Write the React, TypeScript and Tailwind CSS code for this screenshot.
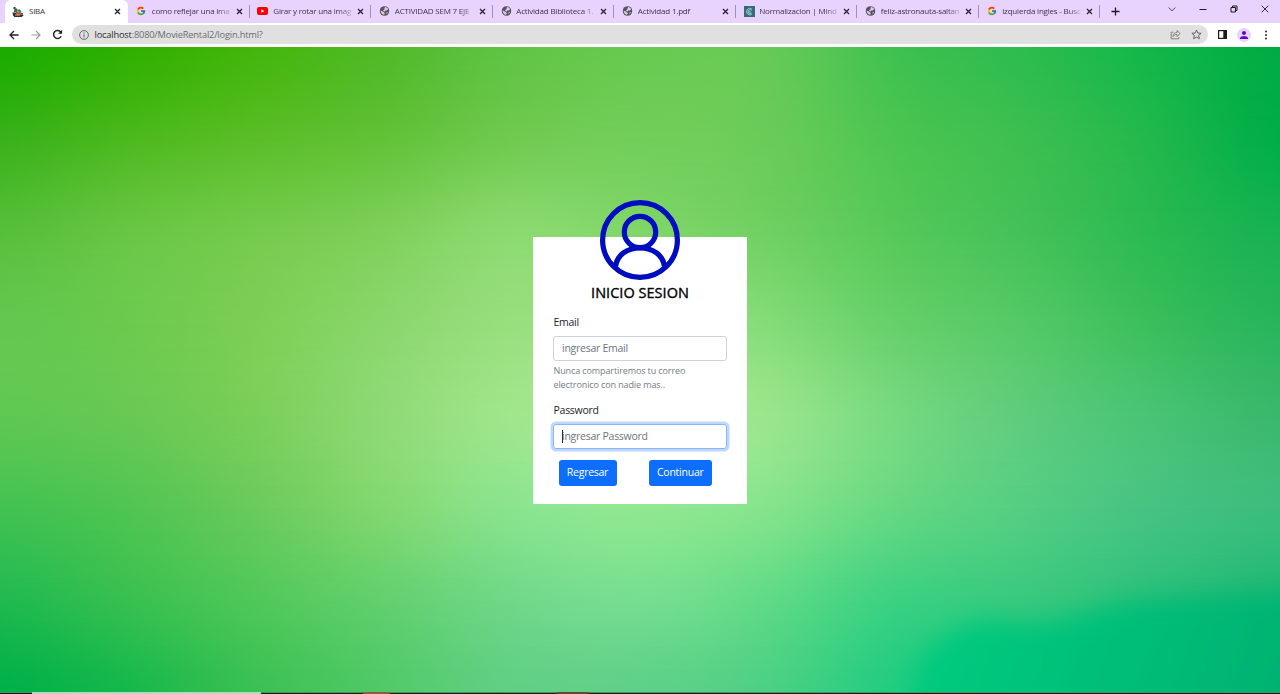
import type { ReactNode } from "react";
import { FcGoogle } from "react-icons/fc";
import { MdPerson } from "react-icons/md";

/* ---------- page background: a smooth colour mesh ---------- */

const MESH = [
  "1aac00 2fb000 43b60c 50ba28 60c444 68ca50 66ca56 3fc150 2dbc4e 12b74a 00ab43",
  "38b21a 4cb91e 5abe28 62c238 70ca50 72ce5a 6acc58 4cc552 3cbf50 22b84c 00ae48",
  "56bf3a 68c644 74cb4c 7ed05a 8bda70 80d669 70d062 56c95a 44c158 2aba52 18b252",
  "62c850 6cca4e 7ccf56 8ad76c 98df7e 98e080 84dc78 66d06a 54c966 3abe5c 28b55c",
  "5ec852 68c954 7acf5a 8eda76 a0e68c a6ea94 9ae58c 76d980 5ecc7c 48c474 3ab86c",
  "42c252 50c552 6acb5c 82d870 8ae48e 90e890 84e48c 66d882 54ce82 46c382 3cbd7c",
  "20ba50 38c050 50c85a 62d06e 70d888 76de90 60da86 3cd182 38c97e 2ac07a 1cb874",
  "00b049 16b84c 3ac052 50c968 60cf84 5ed088 4cd084 20cc80 0cc67c 04b975 00af6f",
].map((row) =>
  row.split(" ").map((h) => [0, 2, 4].map((i) => parseInt(h.slice(i, i + 2), 16)))
);

const STEP = 4;

function spline(a: number, b: number, c: number, d: number, t: number) {
  return (
    0.5 *
    (2 * b + (c - a) * t + (2 * a - 5 * b + 4 * c - d) * t * t + (3 * b - a - 3 * c + d) * t * t * t)
  );
}

function refine(points: number[][]): number[][] {
  const out: number[][] = [];
  const at = (i: number) => points[Math.max(0, Math.min(points.length - 1, i))];
  for (let i = 0; i < points.length - 1; i++) {
    for (let s = 0; s < STEP; s++) {
      out.push(
        at(i).map((_, k) => spline(at(i - 1)[k], at(i)[k], at(i + 1)[k], at(i + 2)[k], s / STEP))
      );
    }
  }
  out.push(points[points.length - 1]);
  return out;
}

function buildMesh() {
  const wide = MESH.map(refine);
  const columns = wide[0].map((_, c) => refine(wide.map((row) => row[c])));
  return columns[0].map((_, r) => columns.map((col) => col[r]));
}

const ROWS = buildMesh();
const BAND = 645 / (ROWS.length - 1);

const css = (c: number[]) =>
  `rgb(${c.map((v) => Math.round(Math.max(0, Math.min(255, v)))).join(",")})`;

function Backdrop() {
  return (
    <svg className="absolute inset-0 h-full w-full" viewBox="0 0 1280 645" preserveAspectRatio="none">
      <defs>
        {ROWS.map((row, r) => (
          <linearGradient key={r} id={`row${r}`} gradientUnits="userSpaceOnUse" x1="0" x2="1280" y1="0" y2="0">
            {row.map((c, i) => (
              <stop key={i} offset={i / (row.length - 1)} stopColor={css(c)} />
            ))}
          </linearGradient>
        ))}
        <linearGradient id="fade" x1="0" x2="0" y1="0" y2="1">
          <stop offset="0" stopColor="#000" />
          <stop offset="1" stopColor="#fff" />
        </linearGradient>
        <mask id="down" maskContentUnits="objectBoundingBox" style={{ maskType: "luminance" }}>
          <rect width="1" height="1" fill="url(#fade)" />
        </mask>
        <linearGradient id="sea" x1="0" x2="1" y1="0" y2="0.15">
          <stop offset="0" stopColor="#00cd80" />
          <stop offset="0.4" stopColor="#00c27a" />
          <stop offset="1" stopColor="#00b070" />
        </linearGradient>
        <filter id="soft" x="-20%" y="-60%" width="140%" height="220%">
          <feGaussianBlur stdDeviation="12" />
        </filter>
      </defs>
      {ROWS.slice(0, -1).map((_, r) => (
        <g key={r}>
          <rect x="0" y={r * BAND} width="1280" height={BAND + 0.6} fill={`url(#row${r})`} shapeRendering="crispEdges" />
          <rect x="0" y={r * BAND} width="1280" height={BAND + 0.6} fill={`url(#row${r + 1})`} mask="url(#down)" />
        </g>
      ))}
      <path
        d="M905 720 L918 618 Q945 580 990 573 Q1030 582 1065 574 Q1110 556 1160 553 L1340 544 V720 Z"
        fill="url(#sea)"
        filter="url(#soft)"
      />
    </svg>
  );
}

/* ---------- browser chrome ---------- */

function Cross({ className = "" }: { className?: string }) {
  return (
    <svg className={`size-[7px] shrink-0 ${className}`} viewBox="0 0 7 7">
      <path d="M1 1 6 6M6 1 1 6" stroke="#27222f" strokeWidth="1.25" />
    </svg>
  );
}

const Google = () => <FcGoogle className="size-[10px]" />;
const Globe = () => (
  <svg className="size-[10px] translate-x-[0.500px]" viewBox="0 0 20 20">
    <circle cx="10" cy="10" r="9.6" fill="#56515e" />
    <path
      d="M11 2.2c3 .2 5.4 1.8 6.4 4.4l-2.6 2.2-3.2.4-.8 2-2.6-.6-1-2.4 2.6-1.4.2-2.4zM2.4 9.2l3.4 1.4 3.6 2.2 1.4 2-1.6 2.8C5.4 17.6 2.2 14 2.4 9.2zM14 12.4l3-.6c-.6 2-1.8 3.4-3.2 4.4z"
      fill="#d9cae8"
    />
  </svg>
);
const YouTube = () => (
  <svg className="h-[8px] w-[11px]" viewBox="0 0 22 16">
    <rect width="22" height="16" rx="4" fill="#f00" />
    <path d="M8.5 4.5v7l6-3.5z" fill="#fff" />
  </svg>
);
const Mind = () => (
  <svg className="size-[11px] translate-x-px" viewBox="0 0 22 22">
    <rect width="22" height="22" fill="#38697c" />
    <path d="M16 6.5A6.5 6.5 0 1 0 16 16M15 9a4 4 0 1 0 0 5M8 12h6" fill="none" stroke="#a9dcda" strokeWidth="1.7" />
  </svg>
);
const Siba = () => (
  <svg className="h-[11px] w-[12px]" viewBox="0 0 24 22">
    <path d="M1 13h6l3 4h12l1 2-4 3H5l-3-3z" fill="#352c35" />
    <path d="M3 2h4v4H3z" fill="#223d35" />
    <path d="M5 5h5v7H4z" fill="#2e6b45" />
    <path d="M10 7h6l3 5-7 3z" fill="#387a92" />
    <path d="M7 12l6-1 7 3-3 3H9z" fill="#c34a2c" />
    <path d="M11 10l4 2-3 2zM6 17h10v2H6z" fill="#e0b25a" />
    <path d="M18 14h4v3h-4z" fill="#2f6b3f" />
  </svg>
);

const TABS: { icon: () => ReactNode; title: string }[] = [
  { icon: Google, title: "como reflejar una ima" },
  { icon: YouTube, title: "Girar y rotar una imag" },
  { icon: Globe, title: "ACTIVIDAD SEM 7 EJE" },
  { icon: Globe, title: "Actividad Biblioteca 1." },
  { icon: Globe, title: "Actividad 1.pdf" },
  { icon: Mind, title: "Normalizacion | Mind" },
  { icon: Globe, title: "feliz-astronauta-saltan" },
  { icon: Google, title: "izquierda ingles - Busc" },
];

function TabStrip() {
  return (
    <div className="flex h-[23px] items-stretch bg-[#e8d3fe] pl-[5px] text-[8px] tracking-[-0.2px] text-[#3b3643]">
      <div className="flex w-[123px] items-center rounded-t-[6px] bg-white pr-[7px] pb-px pl-[7px]">
        <Siba />
        <span className="ml-[5px] flex-1 tracking-[-0.25px]">SIBA</span>
        <Cross />
      </div>
      {TABS.map(({ icon: Icon, title }) => (
        <div key={title} className="flex w-[121.5px] items-center pb-px">
          <span className="ml-[7px] flex w-[12px] shrink-0 justify-center">
            <Icon />
          </span>
          <span className="ml-[4.8px] w-[80px] whitespace-nowrap [mask-image:linear-gradient(to_right,#000_66px,transparent_82px)]">
            {title}
          </span>
          <Cross className="ml-[4px]" />
          <span className="ml-auto h-[13px] w-px bg-[#a094ad]" />
        </div>
      ))}
      <div className="flex flex-1 items-center pl-[11px]">
        <svg className="size-[9px]" viewBox="0 0 9 9">
          <path d="M4.5 .5v8M.5 4.5h8" stroke="#1c1920" strokeWidth="1.3" />
        </svg>
        <div className="mb-[5px] ml-auto flex items-center gap-[22.7px] pr-[11.5px]">
          <svg className="size-[8px]" viewBox="0 0 8 8">
            <path d="M.6 2.5 4 5.8 7.4 2.5" fill="none" stroke="#3c3743" strokeWidth="0.9" />
          </svg>
          <svg className="size-[8px]" viewBox="0 0 8 8">
            <path d="M.5 4.5h7" stroke="#1c1920" />
          </svg>
          <svg className="size-[8px]" viewBox="0 0 8 8">
            <path d="M1 2.5h4.5V7H1zM2.5 2.5V1H7v4.5H5.5" fill="none" stroke="#1c1920" />
          </svg>
          <svg className="size-[8px]" viewBox="0 0 8 8">
            <path d="M.7 .7 7.3 7.3M7.3 .7 .7 7.3" stroke="#1c1920" strokeWidth="0.9" />
          </svg>
        </div>
      </div>
    </div>
  );
}

function Toolbar() {
  return (
    <div className="flex h-[24px] items-center bg-white pr-[10px] pb-[1px] pl-[9px]">
      <svg className="size-[10px]" viewBox="0 0 10 10">
        <path d="M9.6 5H1.2M5 1 1 5l4 4" fill="none" stroke="#222" strokeWidth="1.3" />
      </svg>
      <svg className="ml-[12px] size-[10px]" viewBox="0 0 10 10">
        <path d="M.4 5h8.4M5 1l4 4-4 4" fill="none" stroke="#9b9b9b" strokeWidth="1.2" />
      </svg>
      <svg className="ml-[11px] size-[11px]" viewBox="0 0 11 11">
        <path d="M9.2 7.2A4 4 0 1 1 8.4 2.7L9.6 4" fill="none" stroke="#222" strokeWidth="1.4" />
        <path d="M10.1 .8v4H6.1z" fill="#222" />
      </svg>
      <div className="ml-[9px] flex h-[19px] w-[1136px] items-center rounded-full bg-[#e0e0e0] pr-[6px] pl-[7px]">
        <svg className="size-[10px]" viewBox="0 0 10 10">
          <circle cx="5" cy="5" r="4.4" fill="none" stroke="#5a5d61" strokeWidth="0.9" />
          <path d="M5 4.4v3M5 2.4v1.1" stroke="#5a5d61" strokeWidth="1" />
        </svg>
        <span className="ml-[5.5px] flex-1 text-[9.3px] tracking-[-0.2px] text-[#6a6c70]">
          <span className="text-[#2c2d30]">localhost</span>:8080/MovieRental2/login.html?
        </span>
        <svg className="size-[11px]" viewBox="0 0 11 11">
          <path d="M3.4 3.2H1.2v6.6h7.6V8" fill="none" stroke="#777" strokeWidth="0.9" />
          <path
            d="M3 7.6C3.2 5 4.6 3.6 7 3.5V1.5l3.2 3-3.2 3V5.5C5.2 5.5 4 6.2 3 7.6z"
            fill="none"
            stroke="#6c6c6c"
            strokeWidth="0.8"
          />
        </svg>
        <svg className="ml-[10px] size-[11px]" viewBox="0 0 11 11">
          <path
            d="M5.5 1l1.3 3 3.3.3-2.5 2.2.8 3.2-2.9-1.7-2.9 1.7.8-3.2L.9 4.3 4.2 4z"
            fill="none"
            stroke="#55575b"
            strokeWidth="0.9"
          />
        </svg>
      </div>
      <svg className="ml-[10px] h-[9px] w-[9px]" viewBox="0 0 9 9">
        <rect x=".6" y=".6" width="7.8" height="7.8" fill="#fff" stroke="#1b1b1b" strokeWidth="1.2" />
        <rect x="5.3" y="1" width="3.2" height="7" fill="#1b1b1b" />
      </svg>
      <span className="ml-[10px] flex size-[14px] items-center justify-center rounded-full bg-[#e8d3fe]">
        <MdPerson className="size-[12px] text-[#5f08c8]" />
      </span>
      <svg className="ml-auto h-[10px] w-[8px]" viewBox="0 0 8 10">
        <circle cx="4" cy="1.5" r=".95" fill="#222" />
        <circle cx="4" cy="5" r=".95" fill="#222" />
        <circle cx="4" cy="8.5" r=".95" fill="#222" />
      </svg>
    </div>
  );
}

/* ---------- login card ---------- */

function Avatar() {
  return (
    <svg className="size-[80px]" viewBox="0 0 80 80" fill="none" stroke="#000cc0" strokeWidth="5.2">
      <circle cx="40" cy="40" r="37.4" />
      <circle cx="40" cy="32" r="15.7" />
      <path d="M15.5 66.5C17 55 27 47.8 40 47.8S63 55 64.5 66.5" />
    </svg>
  );
}

function LoginCard() {
  return (
    <form
      className="relative mt-[190px] flex h-[266.5px] w-[214px] flex-col bg-white px-[20px] tracking-[-0.26px]"
      onSubmit={(e) => e.preventDefault()}
    >
      <div className="-mt-[37px] flex justify-center">
        <Avatar />
      </div>
      <h1 className="mt-[4px] text-center text-[14.5px] leading-[18px] tracking-[0.03px] text-black [-webkit-text-stroke:0.35px_#000]">
        INICIO SESION
      </h1>
      <label className="mt-[12px] pl-[0.5px] text-[10.5px] leading-[17px]">Email</label>
      <div className="mt-[5px] flex h-[25px] items-center rounded-[3px] border border-[#ced4da] bg-white pl-[8px] text-[10.5px] text-[#6c757d]">
        ingresar Email
      </div>
      <p className="mt-[3px] pl-[0.5px] text-[9px] leading-[14px] tracking-[-0.11px] text-[#757e86]">
        Nunca compartiremos tu correo
        <br />
        electronico con nadie mas..
      </p>
      <label className="mt-[10px] pl-[0.5px] text-[10.5px] leading-[17px]">Password</label>
      <div className="mt-[5px] flex h-[25px] items-center rounded-[3px] border border-[#86b7fe] bg-white pl-[8px] text-[10.5px] text-[#6c757d] shadow-[0_0_0_2.5px_#c0d8ff]">
        <span className="-mr-px h-[13px] w-px bg-[#222]" />
        ingresar Password
      </div>
      <div className="mt-[10.5px] flex gap-[32px] pl-[5.5px] text-[10.5px] text-white">
        <button className="h-[26px] w-[58px] rounded-[3px] bg-[#0d6efd] tracking-[-0.26px]">Regresar</button>
        <button className="h-[26px] w-[63.5px] rounded-[3px] bg-[#0d6efd] tracking-[-0.24px]">Continuar</button>
      </div>
    </form>
  );
}

export default function App() {
  return (
    <div className="flex h-[694px] w-[1280px] flex-col overflow-hidden font-['Open_Sans','Noto_Sans',sans-serif] text-[#212529]">
      <TabStrip />
      <Toolbar />
      <main className="relative flex h-[645px] justify-center overflow-hidden">
        <Backdrop />
        <LoginCard />
      </main>
      <footer className="flex h-[2px] bg-linear-to-b from-[#4f8a60] from-50% to-[#0c2414] to-50%">
        <span className="ml-[32px] w-[229px] bg-[#b5d6bd]" />
        <span className="ml-[102px] w-[27px] bg-[#8c5a3c]" />
        <span className="ml-[167px] w-[32px] bg-[#5d4a30]" />
      </footer>
    </div>
  );
}
